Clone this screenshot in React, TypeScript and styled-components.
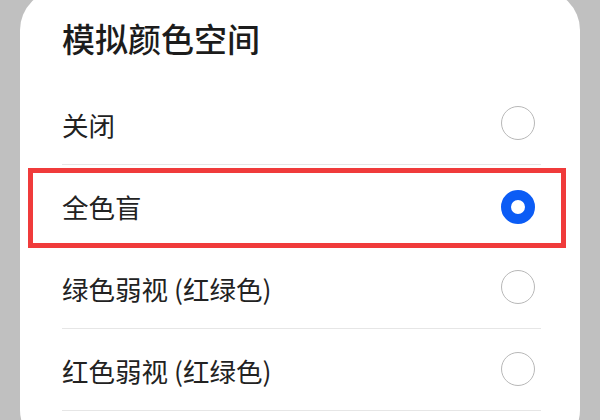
import React from "react";
import styled, { createGlobalStyle } from "styled-components";

const Global = createGlobalStyle`
  html, body {
    margin: 0;
    padding: 0;
    background: #c0c0c0;
    overflow: hidden;
  }
  body {
    font-family: "Noto Sans CJK SC", "Noto Sans", sans-serif;
  }
`;

const Screen = styled.div`
  width: 600px;
  height: 420px;
  overflow: hidden;
  background: #c0c0c0;
  display: flex;
  align-items: flex-start;
`;

const Card = styled.div`
  margin: -10px 0 0 20px;
  width: 560px;
  height: 460px;
  background: #ffffff;
  border-radius: 40px;
  padding: 26px 39px 0 42px;
  box-sizing: border-box;
  display: flex;
  flex-direction: column;
`;

const Title = styled.div`
  font-size: 33px;
  font-weight: 500;
  color: #1c1c1c;
  line-height: 44px;
  height: 67px;
`;

const Row = styled.div`
  position: relative;
  height: 81px;
  display: flex;
  align-items: center;
  justify-content: space-between;
  border-bottom: 1px solid #e6e6e6;
  padding-right: 6px;
`;

const Label = styled.span`
  font-size: 26.5px;
  color: #222222;
  line-height: 1;
  margin-top: 3px;
`;

const Radio = styled.span<{ $checked?: boolean }>`
  width: 34px;
  height: 34px;
  border-radius: 50%;
  box-sizing: border-box;
  border: ${(p) => (p.$checked ? "10px solid #0b5cf5" : "1.6px solid #b8b8b8")};
  background: #fff;
  margin-top: ${(p) => (p.$checked ? "2px" : "-2px")};
`;

const Highlight = styled.div`
  position: absolute;
  left: -34px;
  right: -25px;
  top: 3px;
  bottom: -2px;
  border: 5px solid #f03b3b;
  pointer-events: none;
`;

const options = [
  { label: "关闭", checked: false },
  { label: "全色盲", checked: true },
  { label: "绿色弱视 (红绿色)", checked: false },
  { label: "红色弱视 (红绿色)", checked: false },
];

export default function App() {
  return (
    <>
      <Global />
      <Screen>
        <Card>
          <Title>模拟颜色空间</Title>
          {options.map((o) => (
            <Row key={o.label}>
              <Label>{o.label}</Label>
              <Radio $checked={o.checked} />
              {o.checked && <Highlight />}
            </Row>
          ))}
        </Card>
      </Screen>
    </>
  );
}
